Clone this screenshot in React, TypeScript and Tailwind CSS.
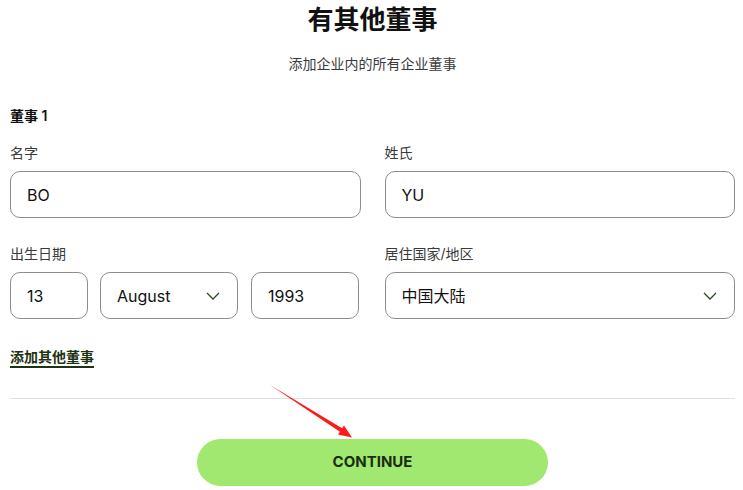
const font = {
  fontFamily: 'Inter, "Noto Sans CJK SC", sans-serif',
};

const Chevron = () => (
  <svg width="14" height="8" viewBox="0 0 14 8" fill="none">
    <path d="M1 1l6 6 6-6" stroke="#2f4a22" strokeWidth="1.3" />
  </svg>
);

const Field = ({ value, className = "" }: { value: string; className?: string }) => (
  <div
    className={`flex h-[47px] items-center rounded-[10px] border border-[#8c8c8c] px-4 text-[16px] text-[#111] ${className}`}
  >
    {value}
  </div>
);

const Select = ({ value, className = "" }: { value: string; className?: string }) => (
  <div
    className={`flex h-[47px] items-center justify-between rounded-[10px] border border-[#8c8c8c] pl-4 pr-[17px] text-[16px] text-[#111] ${className}`}
  >
    <span>{value}</span>
    <Chevron />
  </div>
);

const Label = ({ children }: { children: string }) => (
  <div className="mb-2 h-5 text-[14px] leading-5 text-[#3a3a3a]">{children}</div>
);

export default function App() {
  return (
    <div className="relative h-[490px] w-[743px] overflow-hidden bg-white" style={font}>
      <div className="pl-[10px] pr-[8px]">
        <h1 className="pt-[3px] text-center text-[26px] font-bold leading-[34px] text-[#111]">
          有其他董事
        </h1>
        <p className="mt-[17px] text-center text-[14px] leading-5 text-[#3a3a3a]">
          添加企业内的所有企业董事
        </p>

        <div className="mt-[32px] text-[14px] font-semibold leading-5 text-[#111]">董事 1</div>

        <div className="mt-[17px] grid grid-cols-2 gap-x-6 gap-y-[26px]">
          <div>
            <Label>名字</Label>
            <Field value="BO" />
          </div>
          <div>
            <Label>姓氏</Label>
            <Field value="YU" />
          </div>
          <div>
            <Label>出生日期</Label>
            <div className="flex">
              <Field value="13" className="w-[78px]" />
              <Select value="August" className="ml-3 w-[138px]" />
              <Field value="1993" className="ml-[13px] w-[108px]" />
            </div>
          </div>
          <div>
            <Label>居住国家/地区</Label>
            <Select value="中国大陆" />
          </div>
        </div>

        <div className="mt-[25px]">
          <span className="border-b-2 border-[#1e3311] pb-[1px] text-[14px] font-bold leading-5 text-[#1e3311]">
            添加其他董事
          </span>
        </div>

        <div className="mt-[30px] h-px bg-[#e2e2e2]" />

        <button className="mx-auto mt-[40px] flex h-[47px] w-[351px] items-center justify-center rounded-full bg-[#a0e870] text-[15px] font-bold text-[#1a2e0f]">
          CONTINUE
        </button>
      </div>

      <svg
        className="pointer-events-none absolute left-0 top-0"
        width="743"
        height="490"
        viewBox="0 0 743 490"
      >
        <polygon
          points="270,385 339.9,431.7 338,434.5 352,437.5 344,425.5 342.1,428.3"
          fill="#ff1a1a"
        />
      </svg>
    </div>
  );
}
